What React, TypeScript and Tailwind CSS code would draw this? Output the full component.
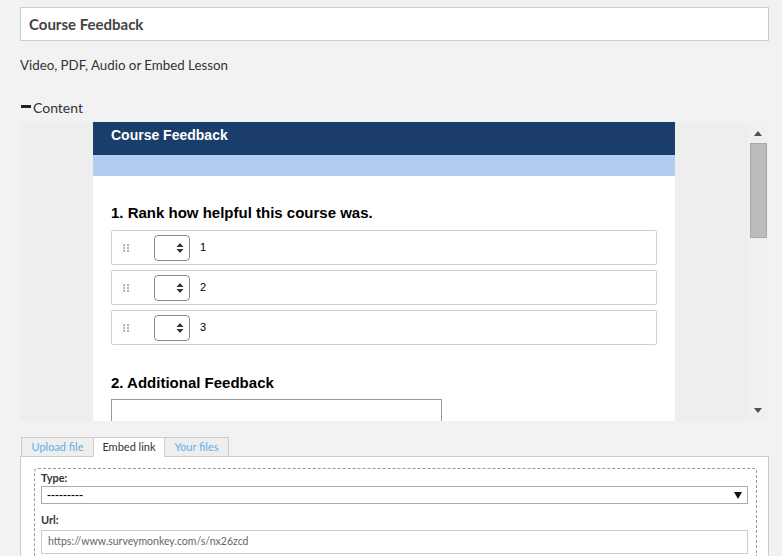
import React from "react";

function Spinner() {
    return (
        <div className="w-[36px] h-[26px] rounded-[4px] border border-[#8a8a8a] bg-white flex items-center justify-end pr-[5px]">
            <svg width="8" height="12" viewBox="0 0 8 12">
                <path d="M4 1 L7.5 5 L0.5 5 Z" fill="#333" />
                <path d="M4 11 L7.5 7 L0.5 7 Z" fill="#333" />
            </svg>
        </div>
    );
}

function DragDots() {
    return (
        <div className="grid grid-cols-2 gap-x-[2px] gap-y-[1px] w-[6px]">
            {[0, 1, 2, 3, 4, 5].map((i) => (
                <span key={i} className="w-[2px] h-[2px] bg-[#b5b5b5]" />
            ))}
        </div>
    );
}

function RankRow({ n }: { n: number }) {
    return (
        <div className="h-[35px] border border-[#cfcfcf] rounded-[2px] flex items-center pl-[11px]">
            <DragDots />
            <div className="ml-[25px]">
                <Spinner />
            </div>
            <span className="ml-[10px] text-[11px] text-black">{n}</span>
        </div>
    );
}

function Scrollbar() {
    return (
        <div className="w-[20px] shrink-0 bg-[#f0f0f0] flex flex-col items-center">
            <svg width="8" height="5" viewBox="0 0 8 5" className="mt-[9px]">
                <path d="M4 0 L8 5 L0 5 Z" fill="#505050" />
            </svg>
            <div className="mt-[7px] w-[17px] h-[95px] bg-[#bcbcbc] border border-[#a8a8a8]" />
            <div className="flex-1" />
            <svg width="8" height="5" viewBox="0 0 8 5" className="mb-[8px]">
                <path d="M4 5 L8 0 L0 0 Z" fill="#505050" />
            </svg>
        </div>
    );
}

function EmbedPreview() {
    return (
        <div className="mt-[5px] h-[299px] w-[748px] bg-[#eeeeee] flex overflow-hidden">
            <div className="flex-1 flex justify-center overflow-hidden font-['Liberation_Sans',Arial,sans-serif]">
                <div className="w-[582px] bg-white">
                    <div className="h-[33px] bg-[#1b3d6b] px-[18px] pt-[5px] text-white text-[14px] leading-[16px] font-bold">
                        Course Feedback
                    </div>
                    <div className="h-[21px] bg-[#b3cdf1]" />
                    <div className="px-[18px] pt-[28px]">
                        <h2 className="text-[15px] leading-[18px] font-bold text-black">1. Rank how helpful this course was.</h2>
                        <div className="mt-[8px] flex flex-col gap-[5px]">
                            <RankRow n={1} />
                            <RankRow n={2} />
                            <RankRow n={3} />
                        </div>
                        <h2 className="mt-[29px] text-[15px] leading-[18px] font-bold text-black">2. Additional Feedback</h2>
                        <div className="mt-[7px] w-[331px] h-[60px] border border-[#999]" />
                    </div>
                </div>
            </div>
            <Scrollbar />
        </div>
    );
}

export default function App() {
    const tabs = [
        { label: "Upload file", w: "w-[73px]", active: false },
        { label: "Embed link", w: "w-[72px]", active: true },
        { label: "Your files", w: "w-[65px]", active: false },
    ];

    return (
        <div className="w-[782px] h-[556px] overflow-hidden bg-[#f2f2f2] pl-[20px] pr-[13px] font-['Lato',sans-serif] text-[#333]">
            <div className="pt-[7px]">
                <div className="h-[34px] border border-[#cccccc] bg-white px-[8px] flex items-center text-[15px] font-bold text-[#444]">
                    Course Feedback
                </div>
            </div>

            <p className="mt-[14px] text-[13.3px] leading-[20px]">Video, PDF, Audio or Embed Lesson</p>

            <div className="mt-[22px] h-[20px] flex items-center text-[14px]">
                <span className="ml-[1px] w-[10px] h-[3px] bg-[#222] mb-[2px]" />
                <span className="ml-[2px]">Content</span>
            </div>

            <EmbedPreview />

            <div className="mt-[16px] flex pl-[1px] relative z-10">
                {tabs.map((t) => (
                    <div
                        key={t.label}
                        className={`${t.w} h-[20px] border border-[#cccccc] -ml-[1px] first:ml-0 flex items-center justify-center text-[11px] ${t.active
                                ? "bg-white text-[#333] border-b-white"
                                : "bg-[#eeeeee] text-[#62aee6]"
                            }`}
                    >
                        {t.label}
                    </div>
                ))}
            </div>

            <div className="-mt-[1px] border border-[#cccccc] bg-white h-[120px] pt-[11px] pl-[13px] pr-[11px]">
                <div className="border border-dashed border-[#999] rounded-[4px] pl-[6px] pr-[8px] pt-[2px] h-[120px]">
                    <div className="text-[11px] font-bold leading-[14px] text-[#333]">Type:</div>
                    <div className="mt-[1px] h-[18px] border border-[#aaaaaa] flex items-center justify-between pl-[5px] pr-[5px] text-[12px] text-black font-['Liberation_Sans',Arial,sans-serif]">
                        <span className="leading-none">---------</span>
                        <svg width="8" height="7" viewBox="0 0 8 7">
                            <path d="M0 0 L8 0 L4 7 Z" fill="#111" />
                        </svg>
                    </div>
                    <div className="mt-[9px] text-[11px] font-bold leading-[14px] text-[#333]">Url:</div>
                    <div className="mt-[3px] h-[24px] border border-[#cccccc] flex items-center pl-[6px] text-[10.5px] text-[#666]">
                        https://www.surveymonkey.com/s/nx26zcd
                    </div>
                </div>
            </div>
        </div>
    );
}
